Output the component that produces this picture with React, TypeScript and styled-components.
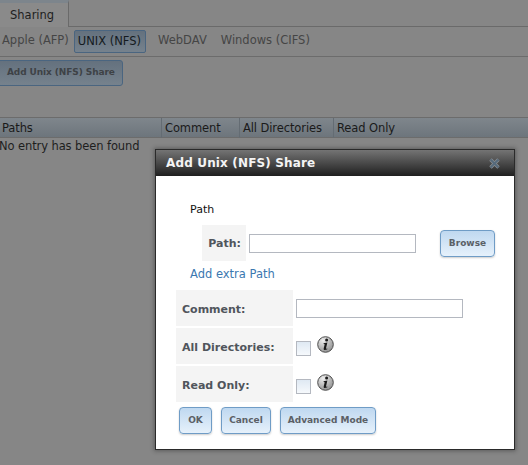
import React from "react";
import styled, { createGlobalStyle } from "styled-components";

const Global = createGlobalStyle`
  html, body { margin: 0; padding: 0; background: #868686; overflow: hidden; }
  body { width: 528px; height: 465px; font-family: "DejaVu Sans", sans-serif; font-size: 11.5px; color: #2a2a2a; }
  #root { position: relative; width: 528px; height: 465px; overflow: hidden; }
`;

const TabStrip = styled.div`
  display: flex;
  height: 26px;
  border-bottom: 1px solid #6a6a6a;
`;
const Tab = styled.div`
  width: 69px;
  height: 27px;
  box-sizing: border-box;
  border-right: 1px solid #6a6a6a;
  border-top: 3px solid #7d858c;
  background: #8a8a8a;
  padding: 5px 0 0 10px;
  color: #1e1e1e;
`;
const SubNav = styled.div`
  display: flex;
  align-items: center;
  height: 29px;
  border-bottom: 1px solid #6c6c6c;
  padding-left: 2px;
  color: #454545;
`;
const SubItem = styled.div<{ $active?: boolean; $gap?: number }>`
  height: 23px;
  line-height: 21px;
  box-sizing: border-box;
  margin-right: ${(p) => p.$gap ?? 0}px;
  padding: 0 ${(p) => (p.$active ? "4px 0 3px" : "0")};
  border-radius: 2px;
  border: ${(p) => (p.$active ? "1px solid #4a6580" : "none")};
  background: ${(p) => (p.$active ? "linear-gradient(#64717e, #76828d)" : "none")};
  color: ${(p) => (p.$active ? "#141a20" : "#454545")};
`;
const ActionRow = styled.div`
  height: 60px;
  padding-top: 3px;
  box-sizing: border-box;
  margin-left: -4px;
`;
const PageButton = styled.div`
  width: 127px;
  height: 26px;
  box-sizing: border-box;
  border: 1px solid #4a6580;
  border-radius: 3px;
  background: linear-gradient(#64717e, #76828d);
  color: #3e4246;
  font-size: 9px;
  font-weight: bold;
  letter-spacing: -0.1px;
  line-height: 23px;
  padding-left: 10px;
  white-space: nowrap;
`;
const TableHead = styled.div`
  display: grid;
  grid-template-columns: 162px 78px 94px 1fr;
  height: 21px;
  box-sizing: border-box;
  border-top: 1px solid #6c6c6c;
  border-bottom: 1px solid #6c6c6c;
  background: linear-gradient(#7f868c, #6d757c);
  color: #1a1a1a;
  letter-spacing: -0.1px;
`;
const HeadCell = styled.div`
  padding-left: 2px;
  line-height: 20px;
  border-right: 1px solid #646c73;
  &:last-child { border-right: none; }
  &:not(:first-child) { padding-left: 3px; }
`;
const Empty = styled.div`
  margin-left: -1px;
  padding-top: 1px;
  line-height: 14px;
  color: #1e1e1e;
  letter-spacing: -0.1px;
`;
const Dialog = styled.div`
  position: absolute;
  left: 155px;
  top: 149px;
  width: 360px;
  height: 301px;
  box-sizing: border-box;
  border: 1px solid #2a2a2a;
  background: #fff;
  box-shadow: 0 0 4px 1px rgba(40, 40, 40, 0.45);
`;
const TitleBar = styled.div`
  display: flex;
  justify-content: space-between;
  align-items: center;
  height: 26px;
  box-sizing: border-box;
  padding: 0 14px 0 10px;
  background: linear-gradient(#747474, #1f1f1f);
  color: #f4f4f4;
  font-size: 12px;
  font-weight: bold;
  letter-spacing: 0.15px;
`;
const Close = styled.svg`
  width: 11px;
  height: 11px;
`;
const Body = styled.div`
  display: flex;
  flex-direction: column;
  padding: 27px 0 0 20px;
`;
const SectionTitle = styled.div`
  margin-left: 14px;
  font-size: 11px;
  line-height: 14px;
  color: #111;
`;
const PathRow = styled.div`
  display: flex;
  align-items: center;
  margin: 8px 0 0 26px;
`;
const PathLabel = styled.div`
  width: 44px;
  height: 36px;
  box-sizing: border-box;
  background: #f4f4f4;
  font-weight: bold;
  font-size: 11px;
  line-height: 38px;
  text-align: right;
  padding-right: 5px;
  color: #50555c;
`;
const TextBox = styled.div<{ $push?: number }>`
  width: 167px;
  height: 19px;
  box-sizing: border-box;
  border: 1px solid #b4b8c0;
  margin-left: 3px;
  margin-right: ${(p) => p.$push ?? 0}px;
`;
const Btn = styled.div<{ $w: number }>`
  width: ${(p) => p.$w}px;
  height: 27px;
  box-sizing: border-box;
  border: 1px solid #6f9cc6;
  border-radius: 4px;
  background: linear-gradient(#bfd8f0, #e6f1fb);
  box-shadow: 0 1px 2px rgba(0, 0, 0, 0.2);
  color: #5b6066;
  font-size: 9px;
  font-weight: bold;
  line-height: 25px;
  text-align: center;
  white-space: nowrap;
`;
const AddLink = styled.div`
  margin: 6px 0 9px 14px;
  line-height: 14px;
  font-size: 11.5px;
  color: #3b78b0;
`;
const FormRow = styled.div`
  display: flex;
  align-items: center;
  height: 36px;
  margin-bottom: 2px;
`;
const FormLabel = styled.div`
  width: 117px;
  height: 36px;
  box-sizing: border-box;
  background: #f4f4f4;
  font-weight: bold;
  font-size: 11px;
  line-height: 40px;
  padding-left: 6px;
  color: #50555c;
  overflow: hidden;
`;
const Check = styled.div`
  width: 15px;
  height: 15px;
  box-sizing: border-box;
  border: 1px solid #b4b8c0;
  background: linear-gradient(#dfe9f3, #f6f9fc);
  margin: 5px 0 0 3px;
`;
const Info = styled.svg`
  width: 17px;
  height: 17px;
  margin: -3px 0 0 6px;
`;
const Actions = styled.div`
  display: flex;
  gap: 9px;
  margin: 3px 0 0 3px;
`;

const InfoIcon = () => (
  <Info viewBox="0 0 17 17">
    <defs>
      <radialGradient id="ig" cx="0.35" cy="0.25" r="0.85">
        <stop offset="0" stopColor="#eeeeee" />
        <stop offset="1" stopColor="#8a8a8a" />
      </radialGradient>
    </defs>
    <circle cx="8.5" cy="8.5" r="7.8" fill="url(#ig)" stroke="#4d4d4d" strokeWidth="1" />
    <circle cx="9.6" cy="4" r="1.5" fill="#1a1a1a" />
    <path d="M6.6 7.2 L10.4 6.6 L9 12.2 Q8.9 13 10.3 12.4 L10.3 13.2 Q8.2 14.4 7 13.8 Q6.4 13.4 6.8 12 L7.7 8.3 L6.6 8.1 Z" fill="#1a1a1a" />
  </Info>
);

export default function App() {
  return (
    <>
      <Global />
      <TabStrip>
        <Tab>Sharing</Tab>
      </TabStrip>
      <SubNav>
        <SubItem $gap={5}>Apple (AFP)</SubItem>
        <SubItem $active $gap={12}>UNIX (NFS)</SubItem>
        <SubItem $gap={14}>WebDAV</SubItem>
        <SubItem>Windows (CIFS)</SubItem>
      </SubNav>
      <ActionRow>
        <PageButton>Add Unix (NFS) Share</PageButton>
      </ActionRow>
      <TableHead>
        <HeadCell>Paths</HeadCell>
        <HeadCell>Comment</HeadCell>
        <HeadCell>All Directories</HeadCell>
        <HeadCell>Read Only</HeadCell>
      </TableHead>
      <Empty>No entry has been found</Empty>
      <Dialog>
        <TitleBar>
          <span>Add Unix (NFS) Share</span>
          <Close viewBox="0 0 11 11">
            <path d="M1.5 1.5 L9.5 9.5 M9.5 1.5 L1.5 9.5" stroke="#8b8f92" strokeWidth="3.4" />
            <path d="M1.5 1.5 L9.5 9.5 M9.5 1.5 L1.5 9.5" stroke="#566a7c" strokeWidth="2" />
          </Close>
        </TitleBar>
        <Body>
          <SectionTitle>Path</SectionTitle>
          <PathRow>
            <PathLabel>Path:</PathLabel>
            <TextBox $push={24} />
            <Btn $w={55}>Browse</Btn>
          </PathRow>
          <AddLink>Add extra Path</AddLink>
          <FormRow>
            <FormLabel>Comment:</FormLabel>
            <TextBox />
          </FormRow>
          <FormRow>
            <FormLabel>All Directories:</FormLabel>
            <Check />
            <InfoIcon />
          </FormRow>
          <FormRow>
            <FormLabel>Read Only:</FormLabel>
            <Check />
            <InfoIcon />
          </FormRow>
          <Actions>
            <Btn $w={33}>OK</Btn>
            <Btn $w={50}>Cancel</Btn>
            <Btn $w={96}>Advanced Mode</Btn>
          </Actions>
        </Body>
      </Dialog>
    </>
  );
}
